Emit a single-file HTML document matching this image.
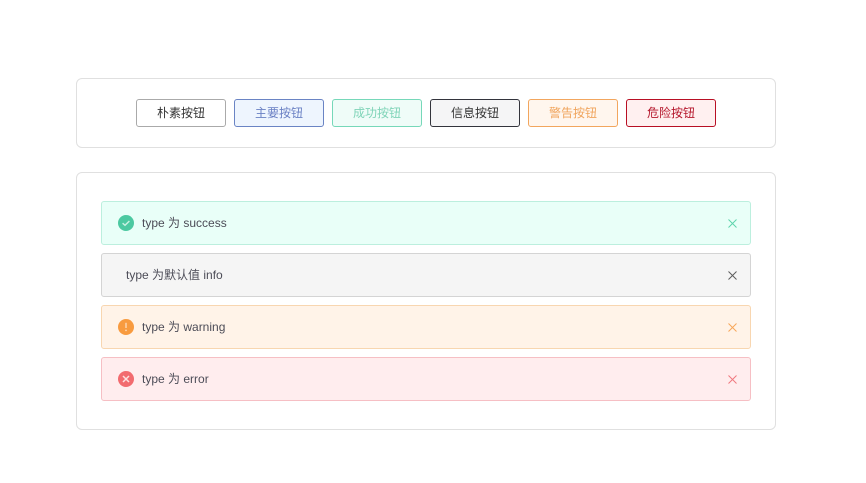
<!DOCTYPE html>
<html lang="zh">
<head>
<meta charset="utf-8">
<style>
html,body{margin:0;padding:0;background:#fff;width:866px;height:483px;overflow:hidden}
body{position:relative;font-family:"Liberation Sans","Noto Sans CJK SC",sans-serif;-webkit-font-smoothing:antialiased}
.card{position:absolute;box-sizing:border-box;left:76px;width:700px;border:1px solid #e0e0e0;border-radius:6px;background:#fff}
.btn{position:absolute;box-sizing:border-box;top:99px;width:90px;height:28px;line-height:26px;border:1px solid;border-radius:3px;text-align:center;font-size:12px}
.alert{position:absolute;box-sizing:border-box;left:101px;width:650px;height:44px;border:1px solid;border-radius:3px}
.t{position:absolute;top:0;line-height:42px;font-size:12px;color:#4c4c57;white-space:nowrap}
svg{position:absolute;display:block}
</style>
</head>
<body>
<div class="card" style="top:78px;height:70px"></div>
<div class="btn" style="left:136px;color:#333;border-color:#aaa;background:#fff">朴素按钮</div>
<div class="btn" style="left:234px;color:#6a80c4;border-color:#6a84c4;background:#eef5fe">主要按钮</div>
<div class="btn" style="left:332px;color:#7fd4b8;border-color:#76d8b9;background:#effcf8">成功按钮</div>
<div class="btn" style="left:430px;color:#333;border-color:#33343c;background:#f5f5f6">信息按钮</div>
<div class="btn" style="left:528px;color:#f0a45c;border-color:#f2a65e;background:#fff6ee">警告按钮</div>
<div class="btn" style="left:626px;color:#b4142a;border-color:#b80f24;background:#fff0f0">危险按钮</div>

<div class="card" style="top:172px;height:258px"></div>

<div class="alert" style="top:201px;background:#e9fff8;border-color:#bcefde">
<svg style="left:16px;top:13px" width="16" height="16" viewBox="0 0 16 16"><circle cx="8" cy="8" r="8" fill="#4cc9a1"/><path d="M4.6 8.2L7 10.3L11.4 6" fill="none" stroke="#c9f1e2" stroke-width="1.4"/></svg>
<div class="t" style="left:40px">type 为 success</div>
<svg style="left:626px;top:17px" width="9" height="9" viewBox="0 0 9 9"><path d="M.5.5L8.5 8.5M8.5.5L.5 8.5" stroke="#5fd3ad" stroke-width="1" fill="none"/></svg>
</div>

<div class="alert" style="top:253px;background:#f5f5f5;border-color:#d4d4d4">
<div class="t" style="left:24px">type 为默认值 info</div>
<svg style="left:626px;top:17px" width="9" height="9" viewBox="0 0 9 9"><path d="M.5.5L8.5 8.5M8.5.5L.5 8.5" stroke="#5c5c5c" stroke-width="1" fill="none"/></svg>
</div>

<div class="alert" style="top:305px;background:#fff3e8;border-color:#f8d6b0">
<svg style="left:16px;top:13px" width="16" height="16" viewBox="0 0 16 16"><circle cx="8" cy="8" r="8" fill="#f89b3f"/><path d="M8 3.8V9" stroke="#fcd9b6" stroke-width="1.4" fill="none"/><circle cx="8" cy="11.4" r=".9" fill="#fcd9b6"/></svg>
<div class="t" style="left:40px">type 为 warning</div>
<svg style="left:626px;top:17px" width="9" height="9" viewBox="0 0 9 9"><path d="M.5.5L8.5 8.5M8.5.5L.5 8.5" stroke="#f7a65a" stroke-width="1" fill="none"/></svg>
</div>

<div class="alert" style="top:357px;background:#ffedee;border-color:#f6bfc4">
<svg style="left:16px;top:13px" width="16" height="16" viewBox="0 0 16 16"><circle cx="8" cy="8" r="8" fill="#f26b6f"/><path d="M5 5L11 11M11 5L5 11" stroke="#fde0e0" stroke-width="1.5" fill="none"/></svg>
<div class="t" style="left:40px">type 为 error</div>
<svg style="left:626px;top:17px" width="9" height="9" viewBox="0 0 9 9"><path d="M.5.5L8.5 8.5M8.5.5L.5 8.5" stroke="#f0787e" stroke-width="1" fill="none"/></svg>
</div>
</body>
</html>
